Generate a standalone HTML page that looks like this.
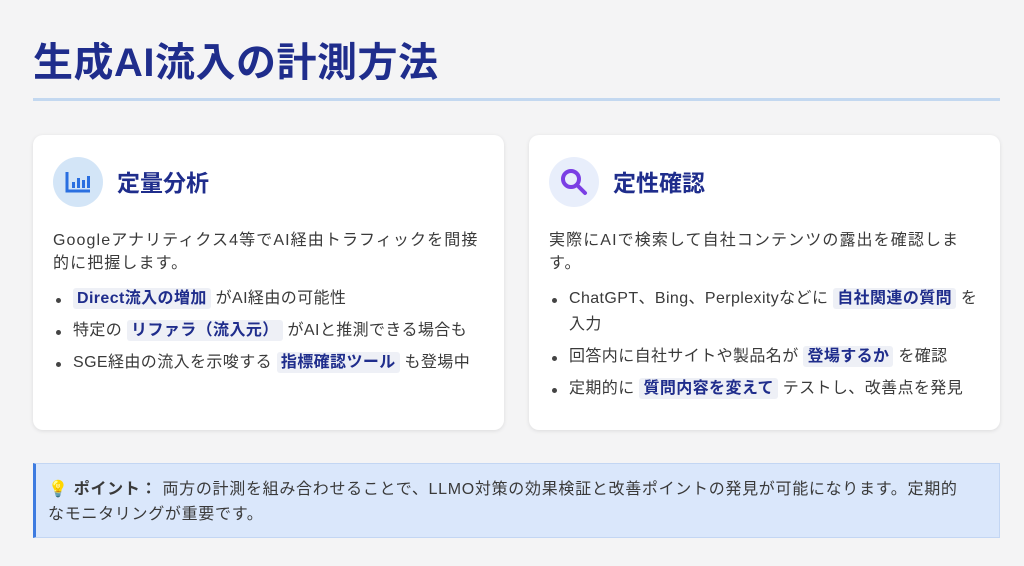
<!DOCTYPE html>
<html><head><meta charset="utf-8"><style>
*{margin:0;padding:0;box-sizing:border-box}
body{width:1024px;height:566px;background:#f4f4f5;font-family:"Liberation Sans","Noto Sans CJK JP",sans-serif;color:#333;position:relative;overflow:hidden}
h1{position:absolute;left:33px;top:30px;font-size:40px;font-weight:bold;color:#1f2d8c;letter-spacing:0.5px}
.line{position:absolute;left:33px;top:98px;width:967px;height:3px;background:#c3d8f0}
.card{position:absolute;top:135px;height:295px;background:#fff;border-radius:10px;box-shadow:0 1px 4px rgba(0,0,0,.1);padding:0 20px}
.ic{position:absolute;left:20px;top:22px;width:50px;height:50px;border-radius:50%;display:flex;align-items:center;justify-content:center}
.h{position:absolute;left:84px;top:29px;font-size:23px;font-weight:bold;color:#1f2d8c}
.p{position:absolute;left:20px;top:94px;font-size:16px;line-height:23px;color:#3a3a3a;width:440px;letter-spacing:1.1px;white-space:nowrap}
ul{position:absolute;left:20px;list-style:none;font-size:16px;color:#3a3a3a;width:440px;letter-spacing:0.4px;white-space:nowrap}
li{position:relative;padding-left:20px;line-height:26px;margin-bottom:6px}
li:before{content:"";position:absolute;left:3px;top:12px;width:5px;height:5px;border-radius:50%;background:#444}
b.k{background:#eef0f6;color:#1f2d8c;padding:2px 4px;border-radius:3px;font-weight:bold}
.tip{position:absolute;left:33px;top:463px;width:967px;height:75px;background:#dae7fb;border:1px solid #c3d6f3;border-left:3px solid #3d7be0;padding:13px 14px 0 12px;font-size:16px;line-height:25px;color:#3a3a3a;white-space:nowrap;letter-spacing:0.7px}
</style></head><body>
<h1>生成AI流入の計測方法</h1>
<div class="line"></div>
<div class="card" style="left:33px;width:471px">
<div class="ic" style="background:#d3e5f7"><svg width="26" height="22" viewBox="0 0 26 22"><path d="M2 1V20H25" stroke="#2a6fe0" stroke-width="3" fill="none"/><rect x="7" y="11" width="3" height="6" fill="#2a6fe0"/><rect x="12" y="7" width="3" height="10" fill="#2a6fe0"/><rect x="17" y="9" width="3" height="8" fill="#2a6fe0"/><rect x="22" y="5" width="3" height="12" fill="#2a6fe0"/></svg></div>
<div class="h">定量分析</div>
<div class="p">Googleアナリティクス4等でAI経由トラフィックを間接<br>的に把握します。</div>
<ul style="top:151px">
<li><b class="k">Direct流入の増加</b> がAI経由の可能性</li>
<li>特定の <b class="k">リファラ（流入元）</b> がAIと推測できる場合も</li>
<li>SGE経由の流入を示唆する <b class="k">指標確認ツール</b> も登場中</li>
</ul></div>
<div class="card" style="left:529px;width:471px">
<div class="ic" style="background:#e8eefb"><svg width="30" height="30" viewBox="0 0 30 30"><circle cx="12" cy="12" r="8" stroke="#7b3fe4" stroke-width="4" fill="none"/><path d="M18 18L26 26" stroke="#7b3fe4" stroke-width="4" stroke-linecap="round"/></svg></div>
<div class="h">定性確認</div>
<div class="p">実際にAIで検索して自社コンテンツの露出を確認しま<br>す。</div>
<ul style="top:151px">
<li>ChatGPT、Bing、Perplexityなどに <b class="k">自社関連の質問</b> を<br>入力</li>
<li>回答内に自社サイトや製品名が <b class="k">登場するか</b> を確認</li>
<li>定期的に <b class="k">質問内容を変えて</b> テストし、改善点を発見</li>
</ul></div>
<div class="tip"><span style="color:#f5a623">💡</span> <b>ポイント：</b> 両方の計測を組み合わせることで、LLMO対策の効果検証と改善ポイントの発見が可能になります。定期的<br>なモニタリングが重要です。</div>
</body></html>
